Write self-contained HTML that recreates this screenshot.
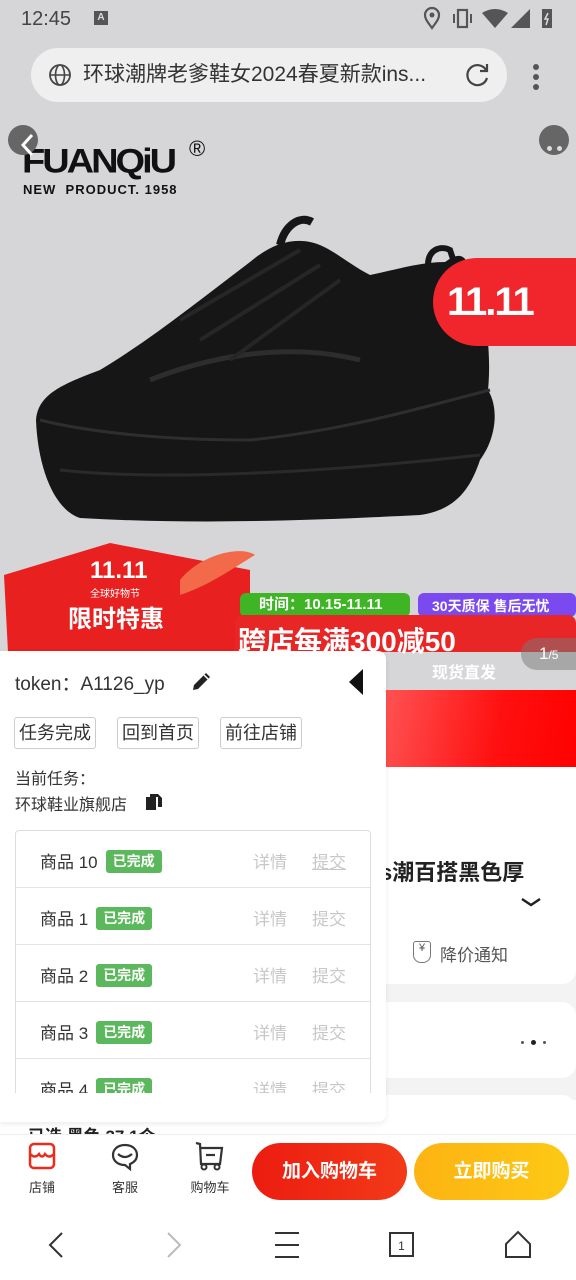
<!DOCTYPE html>
<html><head><meta charset="utf-8">
<style>
*{margin:0;padding:0;box-sizing:border-box}
body{width:576px;height:1280px;overflow:hidden;background:#d6d6d8;font-family:"Liberation Sans","Noto Sans CJK SC",sans-serif;position:relative;color:#222}
.abs{position:absolute}
.sb{top:0;left:0;width:576px;height:40px;font-size:20px;color:#444}
.url{left:31px;top:48px;width:476px;height:54px;border-radius:27px;background:#efeff0;font-size:21px;color:#333;line-height:54px;padding-left:52px}
.btn{display:inline-block;border:1px solid #ccc;border-radius:3px;padding:0 4px;height:32px;line-height:30px;font-size:18px;color:#333;margin-right:21px}
.row{height:57px;border-bottom:1px solid #e3e3e3;position:relative;font-size:17px;color:#333}
.row .n{position:absolute;left:24px;top:17px}
.tag{display:inline-block;background:#5cb85c;color:#fff;font-size:14px;font-weight:bold;padding:0 7px;height:23px;line-height:23px;border-radius:3px;margin-left:8px;vertical-align:2px}
.row .d{position:absolute;left:237px;top:17px;color:#c8c8c8}
.row .s{position:absolute;left:296px;top:17px;color:#c8c8c8}
.nav{font-size:13px;color:#333;text-align:center;width:60px}
</style></head><body>
<!-- status bar -->
<div class="abs sb">
 <div class="abs" style="left:21px;top:8px">12:45</div>
 <div class="abs" style="left:94px;top:11px;width:14px;height:14px;background:#555;color:#ddd;font-size:10px;text-align:center;line-height:14px;font-weight:bold">A</div>
 <svg class="abs" style="left:420px;top:6px" width="140" height="26" viewBox="0 0 140 26">
  <path d="M12 22 C6 14 5 12 5 9 a7 7 0 0 1 14 0 c0 3 -1 5 -7 13z" fill="none" stroke="#555" stroke-width="2.2"/><circle cx="12" cy="9" r="2.5" fill="#555"/>
  <rect x="38" y="4" width="9" height="17" fill="none" stroke="#555" stroke-width="2.2"/><rect x="33" y="8" width="2" height="9" fill="#555"/><rect x="50" y="8" width="2" height="9" fill="#555"/>
  <path d="M62 7 Q75 -1 88 7 L75 22z" fill="#555"/>
  <path d="M110 3 L110 22 L91 22z" fill="#555"/>
  <rect x="122" y="3" width="10" height="19" fill="#555"/><path d="M128 7 L125 13 L128 13 L126 19" stroke="#ddd" stroke-width="1.5" fill="none"/>
 </svg>
</div>
<!-- url bar -->
<div class="abs url">环球潮牌老爹鞋女2024春夏新款ins...</div>
<svg class="abs" style="left:47px;top:62px" width="26" height="26" viewBox="0 0 26 26"><circle cx="13" cy="13" r="10" fill="none" stroke="#444" stroke-width="1.8"/><ellipse cx="13" cy="13" rx="4.5" ry="10" fill="none" stroke="#444" stroke-width="1.6"/><path d="M3 13h20" stroke="#444" stroke-width="1.6"/></svg>
<svg class="abs" style="left:464px;top:61px" width="28" height="28" viewBox="0 0 28 28"><path d="M22 9 A10 10 0 1 0 23 17" fill="none" stroke="#444" stroke-width="2.2"/><path d="M23 3 V10 H16" fill="none" stroke="#444" stroke-width="2.2"/></svg>
<div class="abs" style="left:533px;top:64px;width:6px;height:6px;border-radius:3px;background:#555;box-shadow:0 10px 0 #555,0 20px 0 #555"></div>
<!-- product image -->
<div class="abs" style="left:22px;top:143px;font-size:38px;font-weight:900;letter-spacing:-3px;color:#111;transform:scaleY(0.9);transform-origin:left top">FUANQiU</div>
<div class="abs" style="left:189px;top:136px;font-size:22px;color:#111">®</div>
<div class="abs" style="left:23px;top:182px;font-size:13px;font-weight:bold;color:#111;letter-spacing:1px">NEW&nbsp; PRODUCT. 1958</div>
<div class="abs" style="left:8px;top:125px;width:30px;height:30px;border-radius:15px;background:#666"></div>
<svg class="abs" style="left:18px;top:132px" width="20" height="28"><path d="M14 3 L5 13 L14 23" stroke="#fff" stroke-width="3" fill="none"/></svg>
<div class="abs" style="left:539px;top:125px;width:30px;height:30px;border-radius:15px;background:#666"></div>
<div class="abs" style="left:547px;top:146px;width:5px;height:5px;border-radius:3px;background:#ddd;box-shadow:10px 0 0 #ddd"></div>
<svg class="abs" style="left:0;top:0" width="576" height="540" viewBox="0 0 576 540">
 <path d="M36 420 C38 395 60 385 100 370 C150 340 200 300 250 262 C270 245 290 238 310 242 C330 246 345 262 370 275 C395 270 420 262 445 262 C455 255 465 250 470 270 C485 300 492 350 488 390 C500 410 495 440 480 460 C470 490 455 510 420 515 C320 520 200 525 80 518 C55 510 38 470 36 420z" fill="#161617"/>
 <path d="M40 420 C80 430 150 440 250 440 C350 430 430 405 490 390" stroke="#2e2e30" stroke-width="3" fill="none"/>
 <path d="M60 470 C150 480 300 475 480 455" stroke="#2a2a2c" stroke-width="3" fill="none"/>
 <path d="M150 380 C200 360 280 340 360 360" stroke="#2d2d2f" stroke-width="5" fill="none"/>
 <path d="M180 320 L300 250 M200 340 L320 265 M230 360 L340 280" stroke="#262628" stroke-width="4"/>
 <path d="M280 245 C285 225 300 215 312 222" stroke="#161617" stroke-width="8" fill="none"/>
 <path d="M428 265 C428 250 440 245 450 250 L455 265" stroke="#161617" stroke-width="6" fill="none"/>
</svg>
<div class="abs" style="left:433px;top:258px;width:143px;height:88px;border-radius:44px 0 0 44px;background:#f0262c;color:#fff;font-size:40px;font-weight:900;line-height:88px;padding-left:14px;letter-spacing:-2px">11.11</div>
<!-- banner -->
<svg class="abs" style="left:0;top:540px" width="576" height="112" viewBox="0 0 576 112">
 <path d="M4 35 L110 3 L250 30 L250 112 L8 112z" fill="#e8201f"/>
 <path d="M180 40 C200 15 240 5 255 15 C230 30 210 45 180 55z" fill="#f26a4a"/>
 <rect x="240" y="53" width="170" height="24" rx="6" fill="#3fb526"/>
 <rect x="418" y="53" width="158" height="24" rx="6" fill="#7a4af0"/>
 <rect x="235" y="75" width="341" height="72" rx="8" fill="#e82626"/>
 <rect x="393" y="118" width="160" height="30" rx="12" fill="#f26060"/>
</svg>
<div class="abs" style="left:90px;top:557px;color:#fff;font-size:24px;font-weight:900">11.11</div>
<div class="abs" style="left:90px;top:585px;color:#fff;font-size:10px">全球好物节</div>
<div class="abs" style="left:68px;top:599px;color:#fff;font-size:24px;font-weight:bold">限时特惠</div>
<div class="abs" style="left:259px;top:593px;color:#fff;font-size:15px;font-weight:bold">时间：10.15-11.11</div>
<div class="abs" style="left:432px;top:596px;color:#fff;font-size:14px;font-weight:bold">30天质保 售后无忧</div>
<div class="abs" style="left:238px;top:620px;color:#fff;font-size:28px;font-weight:bold">跨店每满300减50</div>
<div class="abs" style="left:432px;top:659px;color:#fff;font-size:16px;font-weight:bold">现货直发</div>
<div class="abs" style="left:521px;top:638px;width:60px;height:32px;border-radius:16px 0 0 16px;background:rgba(120,120,120,.5);color:#fff;font-size:17px;line-height:32px;padding-left:18px">1<span style="font-size:12px">/5</span></div>
<!-- right page content -->
<div class="abs" style="left:380px;top:690px;width:196px;height:77px;background:linear-gradient(100deg,#f55 0%,#ff1010 60%,#ff0000 100%)"></div>
<div class="abs" style="left:380px;top:767px;width:196px;height:373px;background:#f3f3f3"></div>
<div class="abs" style="left:380px;top:767px;width:196px;height:217px;background:#fff;border-radius:0 0 14px 0"></div>
<div class="abs" style="left:380px;top:855px;font-size:22px;font-weight:bold;color:#222">s潮百搭黑色厚</div>
<svg class="abs" style="left:520px;top:896px" width="22" height="12"><path d="M2 3 L11 9 L20 3" stroke="#222" stroke-width="2.5" fill="none"/></svg>
<div class="abs" style="left:413px;top:941px;width:18px;height:22px;border:1.5px solid #777;border-radius:3px 3px 8px 8px;font-size:11px;text-align:center;color:#555">¥</div>
<div class="abs" style="left:440px;top:941px;font-size:17px;color:#555">降价通知</div>
<div class="abs" style="left:380px;top:1002px;width:196px;height:76px;background:#fff;border-radius:0 14px 14px 0"></div>
<div class="abs" style="left:521px;top:1041px;width:3px;height:3px;background:#555;border-radius:2px"></div>
<div class="abs" style="left:531px;top:1040px;width:5px;height:5px;background:#222;border-radius:3px"></div>
<div class="abs" style="left:543px;top:1041px;width:3px;height:3px;background:#555;border-radius:2px"></div>
<div class="abs" style="left:380px;top:1095px;width:196px;height:45px;background:#fff;border-radius:0 14px 0 0"></div>
<div class="abs" style="left:0;top:1100px;width:576px;height:40px;background:#fff"></div>
<div class="abs" style="left:28px;top:1122px;font-size:17px;font-weight:bold;color:#222;height:12px;overflow:hidden">已选 黑色 37 1个</div>
<!-- panel -->
<div class="abs" style="left:0;top:651px;width:386px;height:471px;background:#fff;border-radius:0 8px 8px 0;box-shadow:0 2px 6px rgba(0,0,0,.08)">
 <div class="abs" style="left:15px;top:18px;font-size:19px;color:#333">token：A1126_yp</div>
 <svg class="abs" style="left:190px;top:18px" width="24" height="24" viewBox="0 0 24 24"><path d="M3 21 L4 16 L16 4 L20 8 L8 20z" fill="#222"/><path d="M14 6 L18 10" stroke="#fff" stroke-width="1.5"/></svg>
 <svg class="abs" style="left:346px;top:16px" width="20" height="30"><path d="M17 2 L3 15 L17 28z" fill="#111"/></svg>
 <div class="abs" style="left:14px;top:66px;white-space:nowrap"><span class="btn">任务完成</span><span class="btn">回到首页</span><span class="btn">前往店铺</span></div>
 <div class="abs" style="left:15px;top:114px;font-size:16px;color:#333">当前任务：</div>
 <div class="abs" style="left:15px;top:140px;font-size:16px;color:#333">环球鞋业旗舰店</div>
 <svg class="abs" style="left:145px;top:142px" width="18" height="18" viewBox="0 0 18 18"><rect x="1" y="4" width="10" height="13" fill="#222"/><path d="M5 1 H13 L17 5 V14 H13 V4 H5z" fill="#222"/></svg>
 <div class="abs" style="left:15px;top:179px;width:356px;height:263px;border:1px solid #ddd;border-bottom:none;border-radius:4px 4px 0 0;overflow:hidden">
  <div class="row"><span class="n">商品 10<span class="tag">已完成</span></span><span class="d">详情</span><span class="s" style="text-decoration:underline">提交</span></div>
  <div class="row"><span class="n">商品 1<span class="tag">已完成</span></span><span class="d">详情</span><span class="s">提交</span></div>
  <div class="row"><span class="n">商品 2<span class="tag">已完成</span></span><span class="d">详情</span><span class="s">提交</span></div>
  <div class="row"><span class="n">商品 3<span class="tag">已完成</span></span><span class="d">详情</span><span class="s">提交</span></div>
  <div class="row"><span class="n">商品 4<span class="tag">已完成</span></span><span class="d">详情</span><span class="s">提交</span></div>
 </div>
</div>
<!-- bottom action bar -->
<div class="abs" style="left:0;top:1134px;width:576px;height:146px;background:#fff;border-top:1px solid #eee"></div>
<svg class="abs" style="left:28px;top:1142px" width="28" height="28" viewBox="0 0 28 28"><rect x="2" y="2" width="24" height="24" rx="4" fill="none" stroke="#f02a1a" stroke-width="2.5"/><path d="M2 12 Q7 17 11 12 Q14 17 17 12 Q21 17 26 12" stroke="#f02a1a" stroke-width="2.5" fill="none"/></svg>
<div class="abs nav" style="left:12px;top:1177px">店铺</div>
<svg class="abs" style="left:110px;top:1142px" width="30" height="30" viewBox="0 0 30 30"><path d="M15 3 C7 3 3 8 3 13 C3 19 8 23 15 23 L20 27 L20 22 C25 20 27 17 27 13 C27 8 23 3 15 3z" fill="none" stroke="#333" stroke-width="2.2"/><path d="M8 12 Q15 18 22 12" stroke="#333" stroke-width="2.2" fill="none"/></svg>
<div class="abs nav" style="left:95px;top:1177px">客服</div>
<svg class="abs" style="left:194px;top:1140px" width="32" height="32" viewBox="0 0 32 32"><path d="M2 3 L6 4 L7 24 H26 L28 8 L7 8" fill="none" stroke="#333" stroke-width="2.2"/><path d="M12 15 H21" stroke="#333" stroke-width="2.2"/><circle cx="10" cy="27" r="2.5" fill="none" stroke="#333" stroke-width="2"/><circle cx="23" cy="27" r="2.5" fill="none" stroke="#333" stroke-width="2"/></svg>
<div class="abs nav" style="left:180px;top:1177px">购物车</div>
<div class="abs" style="left:252px;top:1143px;width:155px;height:57px;border-radius:29px;background:linear-gradient(90deg,#ec1c10,#f33a18);color:#fff;font-size:19px;font-weight:bold;text-align:center;line-height:57px">加入购物车</div>
<div class="abs" style="left:414px;top:1143px;width:155px;height:57px;border-radius:29px;background:linear-gradient(90deg,#fdb312,#fdc915);color:#fff;font-size:19px;font-weight:bold;text-align:center;line-height:57px">立即购买</div>
<!-- nav bar -->
<svg class="abs" style="left:0;top:1225px" width="576" height="40" viewBox="0 0 576 40">
 <path d="M62 8 L50 20 L62 32" stroke="#333" stroke-width="2" fill="none"/>
 <path d="M168 8 L180 20 L168 32" stroke="#bbb" stroke-width="2" fill="none"/>
 <path d="M275 8 H299 M275 20 H299 M275 32 H299" stroke="#333" stroke-width="2"/>
 <rect x="390" y="8" width="23" height="23" fill="none" stroke="#333" stroke-width="2"/>
 <text x="401.5" y="25" font-size="12" text-anchor="middle" fill="#333" font-family="Liberation Sans">1</text>
 <path d="M506 32 V19 L518 7 L530 19 V32z" stroke="#333" stroke-width="2" fill="none"/>
</svg>
</body></html>
